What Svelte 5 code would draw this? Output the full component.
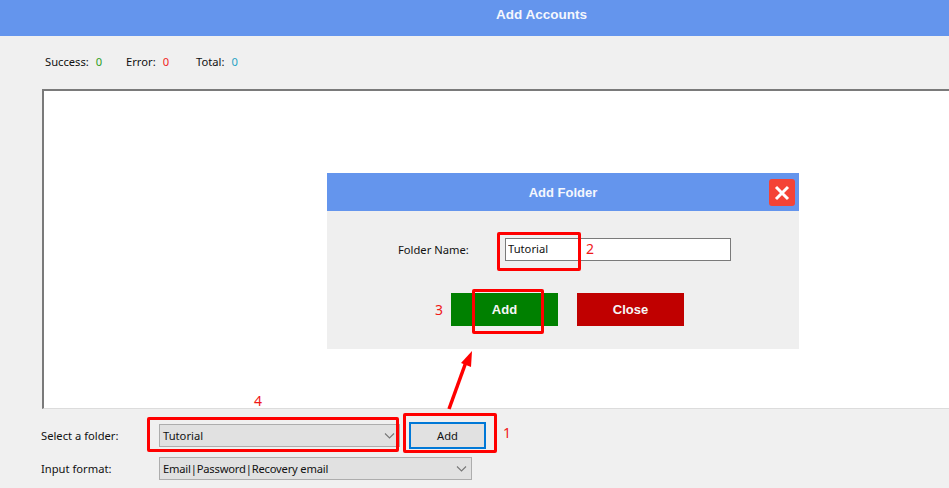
<script lang="ts">
  let stats = [
    { label: 'Success:', value: 0, color: '#2e9e1f' },
    { label: 'Error:', value: 0, color: '#f01c1c' },
    { label: 'Total:', value: 0, color: '#1fa3c4' }
  ];

  // annotation overlays drawn on top of the screenshot
  let marks = [
    { x: 497, y: 232, w: 84, h: 39 },
    { x: 472, y: 289, w: 72, h: 45 },
    { x: 147, y: 417, w: 252, h: 35 },
    { x: 403, y: 413, w: 94, h: 40 }
  ];
  let notes = [
    { x: 586, y: 240, t: '2' },
    { x: 435, y: 301, t: '3' },
    { x: 254, y: 392, t: '4' },
    { x: 503, y: 424, t: '1' }
  ];
</script>

<div class="page">
  <header class="topbar">Add Accounts</header>

  <div class="stats">
    {#each stats as s}
      <div class="stat">
        <span>{s.label}</span>
        <span style="color: {s.color}">{s.value}</span>
      </div>
    {/each}
  </div>

  <div class="listbox"></div>

  <div class="controls">
    <div class="row">
      <span class="lbl">Select a folder:</span>
      <div class="combo short">
        <span>Tutorial</span>
        <svg width="11" height="6" viewBox="0 0 11 6"><path d="M1 .5l4.5 4.5L10 .5" fill="none" stroke="#777" stroke-width="1.1" /></svg>
      </div>
      <button class="add-btn">Add</button>
    </div>
    <div class="row">
      <span class="lbl">Input format:</span>
      <div class="combo long">
        <span class="tight">Email|Password|Recovery email</span>
        <svg width="11" height="6" viewBox="0 0 11 6"><path d="M1 .5l4.5 4.5L10 .5" fill="none" stroke="#777" stroke-width="1.1" /></svg>
      </div>
    </div>
  </div>

  <div class="dialog">
    <div class="dialog-title">
      Add Folder
      <button class="x" aria-label="Close">
        <svg width="16" height="16" viewBox="0 0 16 16"><path d="M2 2l12 12M14 2L2 14" stroke="#fff" stroke-width="3" /></svg>
      </button>
    </div>
    <div class="dialog-body">
      <div class="field">
        <label for="folder">Folder Name:</label>
        <input id="folder" value="Tutorial" />
      </div>
      <div class="actions">
        <button class="green">Add</button>
        <button class="red">Close</button>
      </div>
    </div>
  </div>

  {#each marks as m}
    <div class="mark" style="left: {m.x}px; top: {m.y}px; width: {m.w}px; height: {m.h}px"></div>
  {/each}
  {#each notes as n}
    <span class="note" style="left: {n.x}px; top: {n.y}px">{n.t}</span>
  {/each}

  <svg class="arrow" width="949" height="488" viewBox="0 0 949 488">
    <path d="M449 409L466 362" stroke="#f00" stroke-width="3.500" fill="none" />
    <path d="M472 351L461 363L471 367Z" fill="#f00" />
  </svg>
</div>

<style>
  :global(body) {
    margin: 0;
  }

  .page {
    position: relative;
    display: flex;
    flex-direction: column;
    width: 949px;
    height: 488px;
    overflow: hidden;
    background: #f0f0f0;
    font-family: "Noto Sans", "Open Sans", sans-serif;
    font-size: 11.2px;
    color: #111;
  }

  .topbar {
    height: 36px;
    flex: none;
    box-sizing: border-box;
    padding-top: 6px;
    padding-left: 134px;
    text-align: center;
    background: #6495ed;
    color: #f4f7fd;
    font-family: "Liberation Sans", sans-serif;
    font-weight: 700;
    font-size: 13.5px;
    line-height: 18px;
  }

  .stats {
    display: grid;
    grid-template-columns: 81px 70px auto;
    height: 53px;
    flex: none;
    box-sizing: border-box;
    padding: 17px 0 0 45px;
    line-height: 17px;
  }

  .stat {
    display: flex;
    gap: 7px;
  }

  .listbox {
    height: 320px;
    flex: none;
    box-sizing: border-box;
    margin: 0 -6px 0 42px;
    background: #fff;
    border: 2px solid #7a7a7a;
    border-right: none;
    border-bottom: 1px solid #dcdcdc;
  }

  .controls {
    display: flex;
    flex-direction: column;
    gap: 10px;
    padding: 15px 0 0 41px;
  }

  .row {
    display: flex;
    align-items: center;
    height: 23px;
  }

  .lbl {
    width: 118px;
    flex: none;
    padding-bottom: 1px;
  }

  .combo {
    display: flex;
    align-items: center;
    justify-content: space-between;
    box-sizing: border-box;
    height: 23px;
    padding: 0 3px;
    padding-right: 4px;
    background: #e1e1e1;
    border: 1px solid #adadad;
  }

  .short {
    width: 241px;
  }

  .long {
    width: 313px;
  }

  .tight {
    letter-spacing: -0.2px;
  }

  .add-btn {
    box-sizing: border-box;
    width: 77px;
    height: 27px;
    margin-left: 9px;
    padding: 0;
    background: #e1e1e1;
    border: 2px solid #0078d7;
    font: inherit;
    color: inherit;
  }

  .dialog {
    position: absolute;
    left: 327px;
    top: 173px;
    width: 472px;
    height: 176px;
    background: #efefef;
  }

  .dialog-title {
    position: relative;
    height: 38px;
    box-sizing: border-box;
    padding-top: 11px;
    text-align: center;
    background: #6495ed;
    color: #f4f7fd;
    font-family: "Liberation Sans", sans-serif;
    font-weight: 700;
    font-size: 13px;
    line-height: 18px;
  }

  .x {
    position: absolute;
    right: 4px;
    top: 6px;
    display: flex;
    align-items: center;
    justify-content: center;
    width: 26px;
    height: 27px;
    padding: 0;
    border: none;
    border-radius: 3px;
    background: #f44336;
  }

  .dialog-body {
    display: flex;
    flex-direction: column;
    padding-top: 27px;
  }

  .field {
    display: flex;
    align-items: center;
    padding-left: 71px;
  }

  .field label {
    width: 107px;
    flex: none;
  }

  .field input {
    box-sizing: border-box;
    width: 226px;
    height: 23px;
    padding: 0 2px 2px;
    background: #fff;
    border: 1px solid #7a7a7a;
    border-radius: 0;
    outline: none;
    font: inherit;
    color: inherit;
  }

  .actions {
    display: flex;
    gap: 19px;
    margin-top: 32px;
    padding-left: 124px;
  }

  .actions button {
    width: 107px;
    height: 33px;
    padding: 0;
    border: none;
    color: #f6f6f6;
    font-family: "Liberation Sans", sans-serif;
    font-weight: 700;
    font-size: 13px;
  }

  .green {
    background: #008000;
  }

  .red {
    background: #c00000;
  }

  .mark {
    position: absolute;
    box-sizing: border-box;
    border: 3px solid #f00;
    border-radius: 2px;
  }

  .note {
    position: absolute;
    color: #f01818;
    font-size: 14px;
    line-height: 18px;
  }

  .arrow {
    position: absolute;
    left: 0;
    top: 0;
    pointer-events: none;
  }
</style>
